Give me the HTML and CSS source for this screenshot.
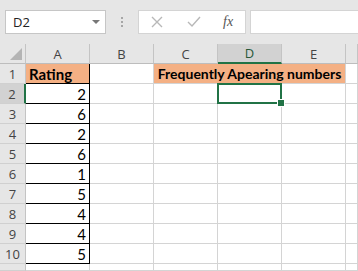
FILE: index.html
```html
<!DOCTYPE html>
<html lang="en">

<head>
    <meta charset="UTF-8">
    <title>Book1 - Excel</title>
    <link rel="stylesheet" href="styles.css">
</head>

<body>
    <div class="toolbar">
        <div class="name-box">
            <span>D2</span>
            <span class="caret"></span>
        </div>
        <div class="grip">
            <i></i><i></i><i></i>
        </div>
        <div class="fx-buttons">
            <svg width="12" height="12" viewBox="0 0 12 12"><path d="M1 1 L11 11 M11 1 L1 11" stroke="#b8b8b8" stroke-width="1.4" fill="none"/></svg>
            <svg width="14" height="12" viewBox="0 0 14 12"><path d="M1 6 L5 10 L13 1" stroke="#b8b8b8" stroke-width="1.4" fill="none"/></svg>
            <span class="fx">fx</span>
        </div>
        <div class="formula-bar"></div>
    </div>

    <div class="sheet">
        <div class="corner"><span class="tri"></span></div>
        <div class="col-head">A</div>
        <div class="col-head">B</div>
        <div class="col-head">C</div>
        <div class="col-head active">D</div>
        <div class="col-head">E</div>
        <div class="col-head"></div>

        <div class="row-head">1</div>
        <div class="cell orange bold boxed-top">Rating</div>
        <div class="cell"></div>
        <div class="cell orange bold merged">Frequently Apearing numbers</div>
        <div class="cell"></div>

        <div class="row-head active">2</div>
        <div class="cell num boxed">2</div>
        <div class="cell"></div>
        <div class="cell"></div>
        <div class="cell selected"></div>
        <div class="cell"></div>
        <div class="cell"></div>

        <div class="row-head">3</div>
        <div class="cell num boxed">6</div>
        <div class="cell"></div><div class="cell"></div><div class="cell"></div><div class="cell"></div><div class="cell"></div>

        <div class="row-head">4</div>
        <div class="cell num boxed">2</div>
        <div class="cell"></div><div class="cell"></div><div class="cell"></div><div class="cell"></div><div class="cell"></div>

        <div class="row-head">5</div>
        <div class="cell num boxed">6</div>
        <div class="cell"></div><div class="cell"></div><div class="cell"></div><div class="cell"></div><div class="cell"></div>

        <div class="row-head">6</div>
        <div class="cell num boxed">1</div>
        <div class="cell"></div><div class="cell"></div><div class="cell"></div><div class="cell"></div><div class="cell"></div>

        <div class="row-head">7</div>
        <div class="cell num boxed">5</div>
        <div class="cell"></div><div class="cell"></div><div class="cell"></div><div class="cell"></div><div class="cell"></div>

        <div class="row-head">8</div>
        <div class="cell num boxed">4</div>
        <div class="cell"></div><div class="cell"></div><div class="cell"></div><div class="cell"></div><div class="cell"></div>

        <div class="row-head">9</div>
        <div class="cell num boxed">4</div>
        <div class="cell"></div><div class="cell"></div><div class="cell"></div><div class="cell"></div><div class="cell"></div>

        <div class="row-head">10</div>
        <div class="cell num boxed">5</div>
        <div class="cell"></div><div class="cell"></div><div class="cell"></div><div class="cell"></div><div class="cell"></div>

        <div class="row-head"></div>
        <div class="cell"></div><div class="cell"></div><div class="cell"></div><div class="cell"></div><div class="cell"></div><div class="cell"></div>
    </div>
</body>

</html>
```
FILE: styles.css
```css
* {
    box-sizing: border-box;
}

body {
    margin: 0;
    width: 358px;
    height: 271px;
    overflow: hidden;
    background-color: #ffffff;
    font-family: "Open Sans", "Liberation Sans", sans-serif;
}

.toolbar {
    display: flex;
    align-items: flex-start;
    height: 44px;
    padding-top: 10px;
    background-color: #e6e6e6;
}

.name-box {
    display: flex;
    align-items: center;
    justify-content: space-between;
    width: 101px;
    height: 24px;
    margin-left: 5px;
    padding: 0 5px 0 7px;
    background-color: #ffffff;
    border: 1px solid #c6c6c6;
    font-size: 13px;
    color: #222;
}

.caret {
    width: 0;
    height: 0;
    border-left: 4px solid transparent;
    border-right: 4px solid transparent;
    border-top: 4px solid #777;
}

.grip {
    display: flex;
    flex-direction: column;
    gap: 2px;
    width: 32px;
    padding-top: 7px;
    align-items: center;
}

.grip i {
    width: 2px;
    height: 2px;
    background-color: #a6a6a6;
}

.fx-buttons {
    display: flex;
    align-items: center;
    width: 108px;
    height: 24px;
    padding-left: 12px;
    gap: 24px;
    background-color: #ffffff;
    border: 1px solid #d4d4d4;
}

.fx {
    font-family: "Liberation Serif", serif;
    font-style: italic;
    font-size: 14px;
    color: #555;
    margin-left: -2px;
}

.formula-bar {
    flex: 1;
    height: 24px;
    margin-left: 4px;
    background-color: #ffffff;
    border: 1px solid #d4d4d4;
    border-right: none;
}

.sheet {
    display: grid;
    grid-template-columns: 26px repeat(5, 64px) 12px;
    grid-template-rows: repeat(11, 20px) 7px;
    overflow: hidden;
}

.corner,
.col-head,
.row-head {
    background-color: #e6e6e6;
    color: #444;
    font-size: 13px;
}

.corner {
    position: relative;
    border-right: 1px solid #c4c4c4;
    border-bottom: 1px solid #bdbdbd;
}

.tri {
    position: absolute;
    right: 3px;
    bottom: 3px;
    width: 0;
    height: 0;
    border-left: 12px solid transparent;
    border-bottom: 12px solid #b4b4b4;
}

.col-head {
    display: flex;
    align-items: center;
    justify-content: center;
    border-right: 1px solid #c4c4c4;
    border-bottom: 1px solid #bdbdbd;
}

.col-head.active {
    background-color: #d2d2d2;
    color: #285838;
    border-bottom: 2px solid #217346;
}

.row-head {
    display: flex;
    align-items: center;
    justify-content: center;
    border-right: 1px solid #c4c4c4;
    border-bottom: 1px solid #d0d0d0;
}

.row-head.active {
    background-color: #d2d2d2;
    border-right: 2px solid #217346;
}

.cell {
    display: flex;
    align-items: center;
    padding: 0 3px;
    border-right: 1px solid #d4d4d4;
    border-bottom: 1px solid #d4d4d4;
    font-family: "Lato", "Liberation Sans", sans-serif;
    font-size: 15px;
    color: #000;
    white-space: nowrap;
}

.orange {
    background-color: #f4b084;
}

.bold {
    font-weight: bold;
}

.merged {
    grid-column: span 3;
    justify-content: center;
    font-size: 14px;
}

.boxed-top {
    border-right: 1px solid #000;
    border-bottom: 1px solid #000;
}

.boxed {
    justify-content: flex-end;
    border-right: 1px solid #000;
    border-bottom: 1px solid #000;
}

.selected {
    position: relative;
}

.selected::after {
    content: "";
    position: absolute;
    left: -1px;
    top: -1px;
    right: -1px;
    bottom: -1px;
    border: 2px solid #217346;
}

.selected::before {
    content: "";
    position: absolute;
    right: -4px;
    bottom: -4px;
    width: 6px;
    height: 6px;
    background-color: #217346;
    border: 1px solid #ffffff;
    z-index: 1;
}
```
